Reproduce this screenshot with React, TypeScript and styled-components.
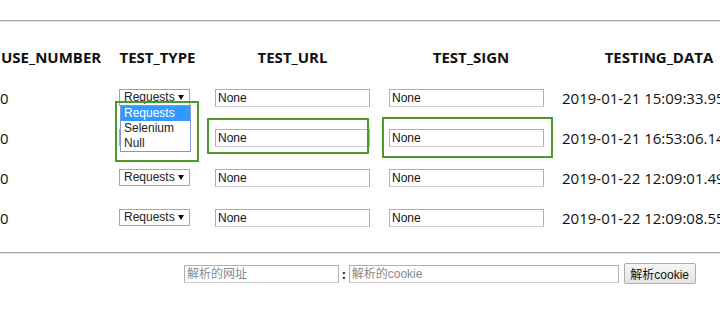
import styled, { createGlobalStyle } from 'styled-components';

const GlobalStyle = createGlobalStyle`
 html, body {
  margin: 0;
  padding: 0;
  background: #fff;
 }
 body {
  font-family: 'Open Sans', 'Noto Sans CJK SC', sans-serif;
  color: #111;
 }
`;

const Page = styled.div`
 position: relative;
 width: 720px;
 height: 318px;
 overflow: hidden;
 padding-top: 20px;
 box-sizing: border-box;
`;

const Rule = styled.div`
 width: 100%;
 height: 0;
 border-top: 1px solid #a8a8a8;
 border-bottom: 1px solid #e6e6e6;
`;

const Grid = styled.div`
 display: grid;
 grid-template-columns: 110px 95px 175px 173px 212px;
 grid-template-rows: 56px repeat(4, 40px);
 width: 765px;
 margin-bottom: 14px;
`;

const HeadCell = styled.div<{ $align?: string; $pad?: number }>`
 display: flex;
 align-items: flex-end;
 justify-content: ${(p) => p.$align || 'center'};
 padding-left: ${(p) => p.$pad || 0}px;
 padding-bottom: 11px;
 box-sizing: border-box;
 font-weight: 700;
 font-size: 15px;
 line-height: 20px;
 white-space: nowrap;
`;

const Cell = styled.div<{ $pad?: number }>`
 position: relative;
 display: flex;
 align-items: center;
 padding-left: ${(p) => p.$pad || 0}px;
 font-size: 15px;
 white-space: nowrap;
`;

const SelectBox = styled.div<{ $focus?: boolean }>`
 display: flex;
 align-items: center;
 justify-content: space-between;
 width: 71px;
 height: 17px;
 box-sizing: border-box;
 padding: 0 5px 0 4px;
 border: 1px solid ${(p) => (p.$focus ? '#7ba7e0' : '#a6a6a6')};
 background: #fff;
 font-family: 'Liberation Sans', sans-serif;
 font-size: 12px;
 color: #222;
 margin-top: -2px;
`;

const Arrow = styled.span`
 width: 0;
 height: 0;
 border-left: 3.5px solid transparent;
 border-right: 3.5px solid transparent;
 border-top: 5px solid #111;
`;

const OptionList = styled.ul`
 position: absolute;
 left: 10px;
 top: 27px;
 z-index: 3;
 width: 71px;
 margin: 0;
 padding: 0;
 list-style: none;
 background: #fff;
 border: 1px solid #7a9ad0;
 box-sizing: border-box;
 font-family: 'Liberation Sans', sans-serif;
 font-size: 12px;
`;

const Option = styled.li<{ $active?: boolean }>`
 height: 15px;
 line-height: 15px;
 padding-left: 3px;
 background: ${(p) => (p.$active ? '#3399ff' : '#fff')};
 color: ${(p) => (p.$active ? '#fff' : '#222')};
`;

const TextInput = styled.input<{ $w?: number }>`
 width: ${(p) => p.$w || 155}px;
 height: 18px;
 box-sizing: border-box;
 padding: 0 2px;
 border: 1px solid #b0b0b0;
 border-bottom-color: #cfcfcf;
 font-family: 'Liberation Sans', 'Noto Sans CJK SC', sans-serif;
 font-size: 12px;
 color: #111;
 outline: none;
 &::placeholder {
  color: #8a8a8a;
 }
`;

const Footer = styled.div`
 display: flex;
 align-items: center;
 gap: 3px;
 padding: 9px 0 0 184px;
`;

const Colon = styled.span`
 font-size: 13px;
 font-weight: 700;
`;

const Button = styled.button`
 height: 21px;
 width: 72px;
 margin-left: 2px;
 padding: 0;
 border: 1px solid #adadad;
 border-radius: 2px;
 background: linear-gradient(#f6f6f6, #e3e3e3);
 font-family: 'Liberation Sans', 'Noto Sans CJK SC', sans-serif;
 font-size: 12px;
 color: #111;
`;

const Mark = styled.div<{ $x: number; $y: number; $w: number; $h: number }>`
 position: absolute;
 left: ${(p) => p.$x}px;
 top: ${(p) => p.$y}px;
 width: ${(p) => p.$w}px;
 height: ${(p) => p.$h}px;
 border: 2px solid #4c9a2a;
 box-sizing: border-box;
 z-index: 4;
 pointer-events: none;
`;

const rows = [
 { date: '2019-01-21 15:09:33.953' },
 { date: '2019-01-21 16:53:06.142' },
 { date: '2019-01-22 12:09:01.493' },
 { date: '2019-01-22 12:09:08.551' },
];

export default function App() {
 return (
  <Page>
   <GlobalStyle />
   <Rule />
   <Grid>
    <HeadCell $align='flex-start' $pad={1}>USE_NUMBER</HeadCell>
    <HeadCell>TEST_TYPE</HeadCell>
    <HeadCell>TEST_URL</HeadCell>
    <HeadCell $pad={9}>TEST_SIGN</HeadCell>
    <HeadCell>TESTING_DATA</HeadCell>
    {rows.flatMap((r, i) => [
     <Cell key={`n${i}`}>0</Cell>,
     <Cell key={`t${i}`} $pad={9}>
      <SelectBox $focus={i === 0}>
       Requests
       <Arrow />
      </SelectBox>
      {i === 0 && (
       <OptionList>
        <Option $active>Requests</Option>
        <Option>Selenium</Option>
        <Option>Null</Option>
       </OptionList>
      )}
     </Cell>,
     <Cell key={`u${i}`} $pad={10}>
      <TextInput defaultValue='None' />
     </Cell>,
     <Cell key={`s${i}`} $pad={9}>
      <TextInput defaultValue='None' />
     </Cell>,
     <Cell key={`d${i}`} $pad={9}>
      {r.date}
     </Cell>,
    ])}
   </Grid>
   <Rule />
   <Footer>
    <TextInput placeholder='解析的网址' />
    <Colon>:</Colon>
    <TextInput $w={270} placeholder='解析的cookie' />
    <Button>解析cookie</Button>
   </Footer>
   <Mark $x={115} $y={101} $w={84} $h={61} />
   <Mark $x={207} $y={118} $w={162} $h={36} />
   <Mark $x={382} $y={117} $w={171} $h={41} />
  </Page>
 );
}
